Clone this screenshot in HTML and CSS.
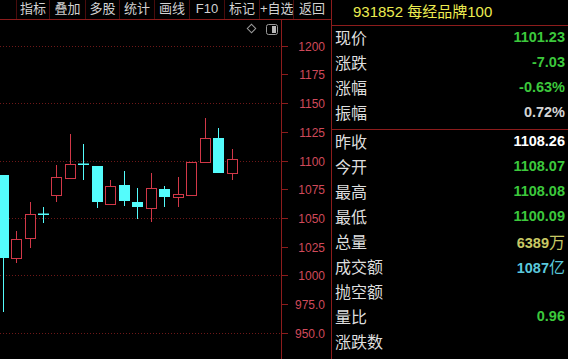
FILE: index.html
```html
<!DOCTYPE html>
<html lang="zh-CN">
<head>
  <meta charset="UTF-8" />
  <title>931852 每经品牌100</title>
  <link rel="stylesheet" href="styles.css">
</head>
<body>
  <main class="screen">
    <section class="chart-col">
      <nav class="toolbar">
        <span class="tool">指标</span>
        <span class="tool">叠加</span>
        <span class="tool">多股</span>
        <span class="tool">统计</span>
        <span class="tool">画线</span>
        <span class="tool">F10</span>
        <span class="tool">标记</span>
        <span class="tool">+自选</span>
        <span class="tool">返回</span>
      </nav>

      <svg class="chart" width="331" height="339" viewBox="0 20 331 339">
        <!-- grid -->
        <g class="grid">
          <line x1="0" y1="46.5" x2="281" y2="46.5"/>
          <line x1="0" y1="103.5" x2="281" y2="103.5"/>
          <line x1="0" y1="161.5" x2="281" y2="161.5"/>
          <line x1="0" y1="218.5" x2="281" y2="218.5"/>
          <line x1="0" y1="275.5" x2="281" y2="275.5"/>
          <line x1="0" y1="333.5" x2="281" y2="333.5"/>
        </g>

        <!-- axis -->
        <line class="axis" x1="281.5" y1="20" x2="281.5" y2="359"/>
        <g class="axis">
          <line x1="281" y1="46.5" x2="288" y2="46.5"/>
          <line x1="281" y1="74.5" x2="288" y2="74.5"/>
          <line x1="281" y1="103.5" x2="288" y2="103.5"/>
          <line x1="281" y1="132.5" x2="288" y2="132.5"/>
          <line x1="281" y1="161.5" x2="288" y2="161.5"/>
          <line x1="281" y1="189.5" x2="288" y2="189.5"/>
          <line x1="281" y1="218.5" x2="288" y2="218.5"/>
          <line x1="281" y1="247.5" x2="288" y2="247.5"/>
          <line x1="281" y1="275.5" x2="288" y2="275.5"/>
          <line x1="281" y1="304.5" x2="288" y2="304.5"/>
          <line x1="281" y1="333.5" x2="288" y2="333.5"/>
        </g>
        <g class="ticks">
          <text x="325" y="51">1200</text>
          <text x="325" y="79">1175</text>
          <text x="325" y="108">1150</text>
          <text x="325" y="137">1125</text>
          <text x="325" y="166">1100</text>
          <text x="325" y="194">1075</text>
          <text x="325" y="223">1050</text>
          <text x="325" y="252">1025</text>
          <text x="325" y="280">1000</text>
          <text x="325" y="309">975.0</text>
          <text x="325" y="338">950.0</text>
        </g>

        <!-- tools -->
        <rect class="icon" x="248.5" y="25.5" width="6" height="6" transform="rotate(45 251.5 28.5)"/>
        <rect class="icon" x="266.5" y="24.5" width="11" height="10" rx="2"/>
        <rect class="icon-fill" x="272" y="26" width="4" height="7"/>

        <!-- falling candles -->
        <g class="down">
          <line x1="3.5" y1="258" x2="3.5" y2="312"/>
          <rect x="-2" y="175" width="11" height="83"/>
          <line x1="43.5" y1="207" x2="43.5" y2="223"/>
          <rect x="38" y="213.5" width="11" height="1.5"/>
          <line x1="83.5" y1="144" x2="83.5" y2="180"/>
          <rect x="78" y="163.5" width="11" height="1.5"/>
          <line x1="97.5" y1="202" x2="97.5" y2="208"/>
          <rect x="92" y="166" width="11" height="36"/>
          <line x1="124.5" y1="171" x2="124.5" y2="206"/>
          <rect x="119" y="185" width="11" height="16"/>
          <line x1="137.5" y1="188" x2="137.5" y2="219"/>
          <rect x="132" y="202" width="11" height="5"/>
          <line x1="164.5" y1="186" x2="164.5" y2="207"/>
          <rect x="159" y="189" width="11" height="8"/>
          <line x1="218.5" y1="128" x2="218.5" y2="138"/>
          <rect x="213" y="138" width="11" height="35"/>
        </g>

        <!-- rising candles -->
        <g class="up">
          <line x1="16.5" y1="231" x2="16.5" y2="239"/>
          <line x1="16.5" y1="259" x2="16.5" y2="263"/>
          <rect x="11.5" y="239.5" width="10" height="19"/>
          <line x1="30.5" y1="202" x2="30.5" y2="214"/>
          <line x1="30.5" y1="239" x2="30.5" y2="248"/>
          <rect x="25.5" y="214.5" width="10" height="24"/>
          <line x1="56.5" y1="165" x2="56.5" y2="177"/>
          <line x1="56.5" y1="196" x2="56.5" y2="202"/>
          <rect x="51.5" y="177.5" width="10" height="18"/>
          <line x1="70.5" y1="134" x2="70.5" y2="164"/>
          <rect x="65.5" y="164.5" width="10" height="14"/>
          <line x1="110.5" y1="180" x2="110.5" y2="186"/>
          <rect x="105.5" y="186.5" width="10" height="18"/>
          <line x1="151.5" y1="173" x2="151.5" y2="188"/>
          <line x1="151.5" y1="209" x2="151.5" y2="222"/>
          <rect x="146.5" y="188.5" width="10" height="20"/>
          <line x1="178.5" y1="177" x2="178.5" y2="194"/>
          <line x1="178.5" y1="198" x2="178.5" y2="207"/>
          <rect x="173.5" y="194.5" width="10" height="3"/>
          <rect x="186.5" y="162.5" width="10" height="33"/>
          <line x1="205.5" y1="118" x2="205.5" y2="138"/>
          <rect x="200.5" y="138.5" width="10" height="24"/>
          <line x1="232.5" y1="149" x2="232.5" y2="159"/>
          <line x1="232.5" y1="174" x2="232.5" y2="180"/>
          <rect x="227.5" y="159.5" width="10" height="14"/>
        </g>
      </svg>
    </section>

    <aside class="quote">
      <h1 class="quote-title">931852 每经品牌100</h1>

      <div class="quote-group">
        <div class="row"><span class="label">现价</span><span class="value green">1101.23</span></div>
        <div class="row"><span class="label">涨跌</span><span class="value green">-7.03</span></div>
        <div class="row"><span class="label">涨幅</span><span class="value green">-0.63%</span></div>
        <div class="row"><span class="label">振幅</span><span class="value grey">0.72%</span></div>
      </div>

      <div class="quote-group second">
        <div class="row"><span class="label">昨收</span><span class="value white">1108.26</span></div>
        <div class="row"><span class="label">今开</span><span class="value green">1108.07</span></div>
        <div class="row"><span class="label">最高</span><span class="value green">1108.08</span></div>
        <div class="row"><span class="label">最低</span><span class="value green">1100.09</span></div>
        <div class="row"><span class="label">总量</span><span class="value yellow">6389<span class="unit">万</span></span></div>
        <div class="row"><span class="label">成交额</span><span class="value cyan">1087<span class="unit">亿</span></span></div>
        <div class="row"><span class="label">抛空额</span><span class="value"></span></div>
        <div class="row"><span class="label">量比</span><span class="value green">0.96</span></div>
        <div class="row"><span class="label">涨跌数</span><span class="value"></span></div>
      </div>
    </aside>
  </main>
</body>
</html>
```

FILE: styles.css
```css
* {
  margin: 0;
  padding: 0;
  box-sizing: border-box;
}

body {
  background: #000;
  color: #dcdcdc;
  font-family: "Liberation Sans", "Noto Sans CJK SC", sans-serif;
  overflow: hidden;
}

.screen {
  display: flex;
  width: 568px;
  height: 359px;
}

/* ---- left: toolbar + k-line ---- */
.chart-col {
  width: 332px;
  border-right: 1px solid #8c1c1c;
  display: flex;
  flex-direction: column;
}

.toolbar {
  height: 20px;
  border-bottom: 1px solid #8c1c1c;
  display: grid;
  grid-template-columns: 33px 36px 34px 35px 35px 35px 35px 34px 37px;
  padding-left: 16px;
}

.tool {
  border-left: 1px solid #4a0c0c;
  color: #d2d2d2;
  font-size: 13px;
  line-height: 18px;
  text-align: center;
  white-space: nowrap;
}

.chart {
  display: block;
}

.grid line {
  stroke: #6e1818;
  stroke-width: 1;
  stroke-dasharray: 1 2;
}

.axis,
.axis line {
  stroke: #8c1c1c;
  stroke-width: 1;
}

.ticks text {
  fill: #d04a5a;
  font-family: "Liberation Sans", sans-serif;
  font-size: 12px;
  text-anchor: end;
}

.icon {
  fill: none;
  stroke: #9a9a9a;
  stroke-width: 1;
}

.icon-fill {
  fill: #b8b8b8;
}

.down rect {
  fill: #54fcfc;
}

.down line {
  stroke: #54fcfc;
  stroke-width: 1;
}

.up rect {
  fill: #000;
  stroke: #d23848;
  stroke-width: 1;
}

.up line {
  stroke: #d23848;
  stroke-width: 1;
}

/* ---- right: quote panel ---- */
.quote {
  flex: 1;
  display: flex;
  flex-direction: column;
}

.quote-title {
  height: 26px;
  border-bottom: 1px solid #8c1c1c;
  padding-left: 21px;
  color: #ecec50;
  font-size: 15px;
  font-weight: normal;
  line-height: 23px;
}

.quote-group {
  height: 104px;
  border-bottom: 1px solid #8c1c1c;
}

.quote-group.second {
  border-bottom: none;
}

.row {
  height: 25px;
  display: flex;
  align-items: center;
  justify-content: space-between;
  padding: 0 3px 4px 3px;
}

.label {
  font-size: 16px;
  color: #dedede;
}

.value {
  font-size: 14.5px;
  font-weight: bold;
}

.unit {
  font-size: 16px;
  font-weight: normal;
}

.green { color: #3cc83c; }
.grey { color: #d4d4d4; }
.white { color: #ffffff; }
.yellow { color: #c8c864; }
.cyan { color: #5ac8dc; }
```
